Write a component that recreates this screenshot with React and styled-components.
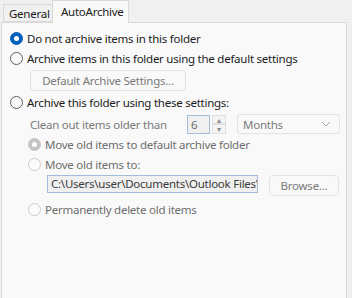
import styled, { createGlobalStyle } from 'styled-components';

const GlobalStyle = createGlobalStyle`
  html, body {
    margin: 0;
    padding: 0;
    background: #f0f0f0;
  }
  body {
    font-family: 'Noto Sans', 'Open Sans', sans-serif;
    font-size: 11.5px;
    letter-spacing: -0.25px;
    color: #1b1b1b;
  }
`;

function Radio({ label, checked, disabled, level = 1 }) {
  return (
    <RadioRow level={level}>
      <RadioCircle checked={checked} disabled={disabled} />
      <RadioLabel disabled={disabled}>{label}</RadioLabel>
    </RadioRow>
  );
}

function Chevron() {
  return (
    <svg width="10" height="6" viewBox="0 0 10 6">
      <path d="M1 1l4 4 4-4" fill="none" stroke="#a8a8a8" strokeWidth="1" />
    </svg>
  );
}

export default function App() {
  return (
    <Window>
      <GlobalStyle />
      <TabStrip>
        <Tab>General</Tab>
        <Tab active>AutoArchive</Tab>
      </TabStrip>
      <Panel>
        <Radio label="Do not archive items in this folder" checked />
        <Radio label="Archive items in this folder using the default settings" />
        <ButtonRow>
          <Button disabled width={156}>Default Archive Settings...</Button>
        </ButtonRow>
        <Radio label="Archive this folder using these settings:" />
        <CleanRow>
          <Muted>Clean out items older than</Muted>
          <Spinner>
            <SpinInput>6</SpinInput>
            <SpinButtons>
              <SpinButton>▴</SpinButton>
              <SpinButton>▾</SpinButton>
            </SpinButtons>
          </Spinner>
          <Select>
            <span>Months</span>
            <Chevron />
          </Select>
        </CleanRow>
        <Radio level={2} label="Move old items to default archive folder" checked disabled />
        <Radio level={2} label="Move old items to:" disabled />
        <PathRow>
          <PathInput>C:\Users\user\Documents\Outlook Files\</PathInput>
          <Button disabled width={70}>Browse...</Button>
        </PathRow>
        <Radio level={2} label="Permanently delete old items" disabled />
      </Panel>
    </Window>
  );
}

const Window = styled.div`
  width: 352px;
  height: 298px;
  display: flex;
  flex-direction: column;
  overflow: hidden;
`;

const TabStrip = styled.div`
  display: flex;
  align-items: flex-end;
  height: 22px;
  padding-left: 3px;
  position: relative;
  z-index: 1;
`;

const Tab = styled.div`
  box-sizing: border-box;
  height: ${({ active }) => (active ? '23px' : '18px')};
  margin-bottom: ${({ active }) => (active ? '-1px' : '0')};
  padding: ${({ active }) => (active ? '3px 8px 0 8px' : '1px 5px 0 5px')};
  width: ${({ active }) => (active ? '77px' : '49px')};
  background: ${({ active }) => (active ? '#f9f9f9' : '#f0f0f0')};
  border: 1px solid #d9d9d9;
  border-bottom: ${({ active }) => (active ? 'none' : '1px solid #d9d9d9')};
  border-right: ${({ active }) => (active ? '1px solid #d9d9d9' : 'none')};
  color: #1b1b1b;
  white-space: nowrap;
`;

const Panel = styled.div`
  flex: 1;
  margin-left: 1px;
  margin-right: 5px;
  background: #f9f9f9;
  border: 1px solid #d9d9d9;
  border-bottom: none;
  padding-top: 5px;
  display: flex;
  flex-direction: column;
`;

const RadioRow = styled.div`
  display: flex;
  align-items: center;
  height: 20px;
  padding-left: ${({ level }) => (level === 2 ? '26px' : '8px')};
`;

const RadioCircle = styled.span`
  box-sizing: border-box;
  width: 13px;
  height: 13px;
  border-radius: 50%;
  margin-right: 4px;
  flex-shrink: 0;
  position: relative;
  background: ${({ checked, disabled }) =>
    checked ? (disabled ? '#c4c4c4' : '#005fb8') : '#fbfbfb'};
  border: 1px solid
    ${({ checked, disabled }) =>
      checked ? (disabled ? '#c4c4c4' : '#005fb8') : disabled ? '#cbcbcb' : '#5e5e5e'};

  &::after {
    content: '';
    display: ${({ checked }) => (checked ? 'block' : 'none')};
    position: absolute;
    left: 3px;
    top: 3px;
    width: 5px;
    height: 5px;
    border-radius: 50%;
    background: #ffffff;
  }
`;

const RadioLabel = styled.span`
  color: ${({ disabled }) => (disabled ? '#6e6e6e' : '#1b1b1b')};
  white-space: nowrap;
`;

const ButtonRow = styled.div`
  display: flex;
  padding-left: 28px;
  margin: 2px 0 1px;
`;

const Button = styled.div`
  box-sizing: border-box;
  width: ${({ width }) => width}px;
  height: 21px;
  display: flex;
  align-items: center;
  justify-content: center;
  background: #f9f9f9;
  border: 1px solid #e3e3e3;
  border-radius: 4px;
  color: ${({ disabled }) => (disabled ? '#7a7a7a' : '#1b1b1b')};
  white-space: nowrap;
`;

const Muted = styled.span`
  color: #7a7a7a;
  width: 157px;
  white-space: nowrap;
`;

const CleanRow = styled.div`
  display: flex;
  align-items: center;
  padding-left: 28px;
  margin-top: 2px;
  height: 20px;
`;

const Spinner = styled.div`
  display: flex;
  align-items: stretch;
  height: 19px;
  gap: 2px;
`;

const SpinInput = styled.div`
  box-sizing: border-box;
  width: 23px;
  border: 1px solid #a4bcdb;
  background: #f0f0f0;
  color: #6e6e6e;
  padding-left: 3px;
  line-height: 17px;
`;

const SpinButtons = styled.div`
  display: flex;
  flex-direction: column;
  width: 14px;
`;

const SpinButton = styled.div`
  flex: 1;
  box-sizing: border-box;
  border: 1px solid #e0e0e0;
  background: #f4f4f4;
  color: #8a8a8a;
  font-size: 8px;
  line-height: 7px;
  text-align: center;
  overflow: hidden;
`;

const Select = styled.div`
  box-sizing: border-box;
  margin-left: 11px;
  width: 103px;
  height: 20px;
  border: 1px solid #e3e3e3;
  border-radius: 3px;
  background: #f9f9f9;
  color: #7a7a7a;
  display: flex;
  align-items: center;
  justify-content: space-between;
  padding: 0 8px 0 5px;
`;

const PathRow = styled.div`
  display: flex;
  align-items: flex-start;
  padding-left: 45px;
  gap: 11px;
  margin: 1px 0 3px;
`;

const PathInput = styled.div`
  box-sizing: border-box;
  width: 211px;
  height: 18px;
  border: 1px solid #a4bcdb;
  background: #f0f0f0;
  color: #3a3a3a;
  padding-left: 3px;
  line-height: 16px;
  white-space: nowrap;
  overflow: hidden;
`;
